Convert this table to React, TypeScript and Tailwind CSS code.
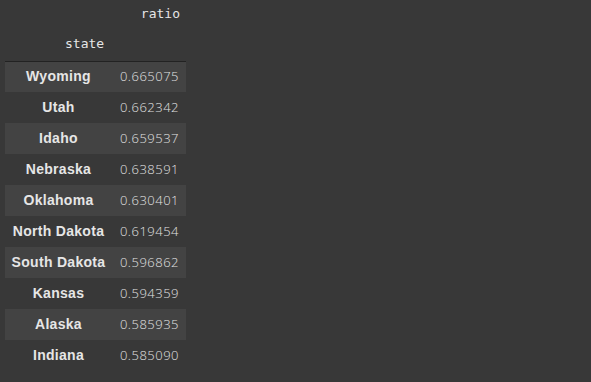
const rows: [string, string][] = [
  ["Wyoming", "0.665075"],
  ["Utah", "0.662342"],
  ["Idaho", "0.659537"],
  ["Nebraska", "0.638591"],
  ["Oklahoma", "0.630401"],
  ["North Dakota", "0.619454"],
  ["South Dakota", "0.596862"],
  ["Kansas", "0.594359"],
  ["Alaska", "0.585935"],
  ["Indiana", "0.585090"],
];

export default function App() {
  return (
    <div className="w-[591px] h-[382px] bg-[#383838] pl-[5px] overflow-hidden">
      <table className="border-collapse text-[13px]">
        <thead className="font-['DejaVu_Sans_Mono',monospace] text-[#e6e6e6] border-b border-[#222222]">
          <tr className="h-[27px]">
            <th className="w-[107px]"></th>
            <th className="w-[74px] text-right pr-[6px] font-normal align-middle">ratio</th>
          </tr>
          <tr className="h-[34px]">
            <th className="text-left pl-[60px] font-normal align-middle pb-[1px]">state</th>
            <th></th>
          </tr>
        </thead>
        <tbody>
          {rows.map(([name, v], i) => (
            <tr key={name} className={i % 2 === 0 ? "h-[31px] bg-[#434343]" : "h-[31px]"}>
              <td className="text-center font-bold text-[14px] text-[#e6e6e6] font-['Liberation_Sans',Arial,sans-serif] tracking-[0.3px]">
                {name}
              </td>
              <td className="text-right pr-[7px] text-[#e2e2e2] font-['Open_Sans',sans-serif] font-light tracking-[0.5px]">
                {v}
              </td>
            </tr>
          ))}
        </tbody>
      </table>
    </div>
  );
}
